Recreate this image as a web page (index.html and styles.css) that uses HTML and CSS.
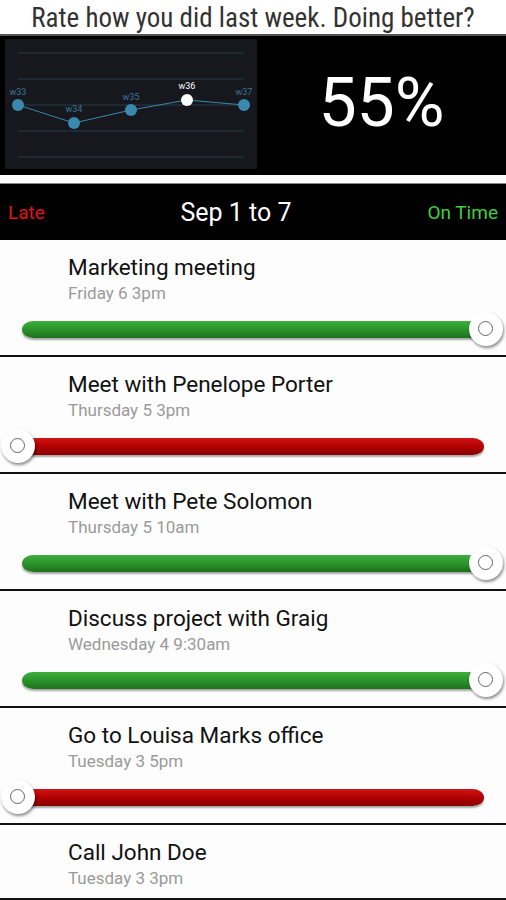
FILE: index.html
```html
<!DOCTYPE html>
<html lang="en">
<head>
    <meta charset="UTF-8">
    <meta name="viewport" content="width=device-width, initial-scale=1.0">
    <title>Weekly Rating</title>
    <link rel="stylesheet" href="styles.css">
</head>
<body>

<h1 class="page-title">Rate how you did last week. Doing better?</h1>

<!-- Weekly trend + score -->
<div class="stats">
    <div class="chart">
        <svg width="252" height="130" viewBox="0 0 252 130">
            <g class="grid">
                <line x1="13" y1="14" x2="239" y2="14"/>
                <line x1="13" y1="40" x2="239" y2="40"/>
                <line x1="13" y1="66" x2="239" y2="66"/>
                <line x1="13" y1="92" x2="239" y2="92"/>
                <line x1="13" y1="118" x2="239" y2="118"/>
            </g>
            <polyline class="trend" points="13,66 69,84 126,71 182,61 239,66"/>
            <g class="labels">
                <text x="13" y="56">w33</text>
                <text x="69" y="73">w34</text>
                <text x="126" y="61">w35</text>
                <text x="182" y="50" class="current">w36</text>
                <text x="239" y="56">w37</text>
            </g>
            <circle class="dot" cx="13" cy="66" r="6"/>
            <circle class="dot" cx="69" cy="84" r="6"/>
            <circle class="dot" cx="126" cy="71" r="6"/>
            <circle class="dot current" cx="182" cy="61" r="6"/>
            <circle class="dot" cx="239" cy="66" r="6"/>
        </svg>
    </div>
    <div class="score">55%</div>
</div>

<div class="week-bar">
    <span class="late">Late</span>
    <span class="week">Sep 1 to 7</span>
    <span class="on-time">On Time</span>
</div>

<ul class="tasks">
    <li class="task">
        <div class="task-title">Marketing meeting</div>
        <div class="task-time">Friday 6 3pm</div>
        <div class="rating">
            <div class="track good"></div>
            <div class="knob right"></div>
        </div>
    </li>
    <li class="task">
        <div class="task-title">Meet with Penelope Porter</div>
        <div class="task-time">Thursday 5 3pm</div>
        <div class="rating">
            <div class="track bad"></div>
            <div class="knob left"></div>
        </div>
    </li>
    <li class="task">
        <div class="task-title">Meet with Pete Solomon</div>
        <div class="task-time">Thursday 5 10am</div>
        <div class="rating">
            <div class="track good"></div>
            <div class="knob right"></div>
        </div>
    </li>
    <li class="task">
        <div class="task-title">Discuss project with Graig</div>
        <div class="task-time">Wednesday 4 9:30am</div>
        <div class="rating">
            <div class="track good"></div>
            <div class="knob right"></div>
        </div>
    </li>
    <li class="task">
        <div class="task-title">Go to Louisa Marks office</div>
        <div class="task-time">Tuesday 3 5pm</div>
        <div class="rating">
            <div class="track bad"></div>
            <div class="knob left"></div>
        </div>
    </li>
    <li class="task">
        <div class="task-title">Call John Doe</div>
        <div class="task-time">Tuesday 3 3pm</div>
    </li>
</ul>

</body>
</html>
```

FILE: styles.css
```css
body {
    font-family: Roboto, "Noto Sans", sans-serif;
    margin: 0;
    padding: 0;
    background-color: #fff;
    width: 506px;
    overflow: hidden;
}

.page-title {
    margin: 0;
    height: 34px;
    line-height: 36px;
    text-align: center;
    font-family: "Roboto Condensed", "Liberation Sans Narrow", "DejaVu Sans Condensed", sans-serif;
    font-weight: normal;
    font-size: 27px;
    color: #333;
}

/* Chart + score panel */
.stats {
    display: flex;
    height: 139px;
    background-color: #000;
    border-top: 2px solid #555;
}

.chart {
    width: 252px;
    height: 130px;
    margin: 3px 0 0 5px;
    background-color: #16181e;
}

.chart svg {
    display: block;
}

.grid line {
    stroke: #22303b;
    stroke-width: 1.5;
}

.trend {
    fill: none;
    stroke: #3a88ad;
    stroke-width: 1;
}

.dot {
    fill: #3a88ad;
}

.dot.current {
    fill: #fff;
}

.labels text {
    font-family: Roboto, sans-serif;
    font-size: 9px;
    fill: #3b7796;
    text-anchor: middle;
}

.labels text.current {
    fill: #fff;
}

.score {
    flex: 1;
    display: flex;
    align-items: center;
    justify-content: center;
    padding-bottom: 6px;
    color: #fff;
    font-size: 68px;
}

/* Week header */
.week-bar {
    display: flex;
    justify-content: space-between;
    align-items: center;
    height: 56px;
    margin-top: 8px;
    padding: 0 8px;
    background-color: #000;
    border-top: 1px solid #888;
}

.late {
    color: #e3121b;
    font-size: 19px;
    width: 100px;
}

.week {
    color: #fff;
    font-size: 25px;
}

.on-time {
    color: #3fcf3f;
    font-size: 19px;
    width: 134px;
    text-align: right;
}

/* Task list */
.tasks {
    list-style: none;
    margin: 0;
    padding: 0;
}

.task {
    padding: 12px 0 9px 68px;
    border-bottom: 2px solid #111;
    background-color: #fdfdfd;
}

.task-title {
    font-size: 22.5px;
    line-height: 30px;
    color: #111;
}

.task-time {
    font-size: 17px;
    line-height: 22px;
    color: #9a9a9a;
}

.rating {
    position: relative;
    height: 34px;
    margin: 8px 0 0 -68px;
}

.track {
    position: absolute;
    top: 9px;
    left: 22px;
    right: 22px;
    height: 17px;
    border-radius: 12px / 9px;
    box-shadow: 0 2px 2px rgba(0, 0, 0, 0.35);
}

.track.good {
    background: linear-gradient(#3fae3f, #2a932a 50%, #1c721c);
}

.track.bad {
    background: linear-gradient(#d01515, #b20000 50%, #860000);
}

.knob {
    position: absolute;
    top: 0;
    width: 34px;
    height: 34px;
    border-radius: 50%;
    background-color: #fff;
    box-shadow: 1px 2px 3px rgba(0, 0, 0, 0.45);
}

.knob::after {
    content: "";
    position: absolute;
    top: 9px;
    left: 9px;
    width: 13px;
    height: 13px;
    border-radius: 50%;
    border: 1.5px solid #666;
}

.knob.right {
    left: 469px;
}

.knob.left {
    left: 1px;
}
```
